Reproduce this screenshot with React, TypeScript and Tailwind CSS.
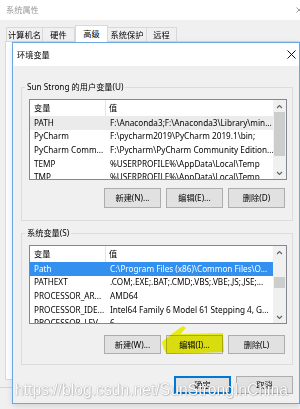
import React from "react"

type Row = { name: string; value: string }

const userRows: Row[] = [
  { name: "PATH", value: "F:\\Anaconda3;F:\\Anaconda3\\Library\\min..." },
  { name: "PyCharm", value: "F:\\pycharm2019\\PyCharm 2019.1\\bin;" },
  { name: "PyCharm Comm...", value: "F:\\Pycharm\\PyCharm Community Edition..." },
  { name: "TEMP", value: "%USERPROFILE%\\AppData\\Local\\Temp" },
  { name: "TMP", value: "%USERPROFILE%\\AppData\\Local\\Temp" },
]

const sysRows: Row[] = [
  { name: "Path", value: "C:\\Program Files (x86)\\Common Files\\O..." },
  { name: "PATHEXT", value: ".COM;.EXE;.BAT;.CMD;.VBS;.VBE;.JS;.JSE;..." },
  { name: "PROCESSOR_AR...", value: "AMD64" },
  { name: "PROCESSOR_IDE...", value: "Intel64 Family 6 Model 61 Stepping 4, G..." },
  { name: "PROCESSOR_LEV...", value: "6" },
]

const tabs = [
  { label: "计算机名", w: "w-[37px]" },
  { label: "硬件", w: "w-[32px]" },
  { label: "高级", w: "w-[33px]", active: true },
  { label: "系统保护", w: "w-[39px]" },
  { label: "远程", w: "w-[30px]" },
]

function Chevron({ up }: { up?: boolean }) {
  return (
    <svg width="7" height="5" viewBox="0 0 7 5" className="block">
      <polyline
        points={up ? "1,4 3.5,1.5 6,4" : "1,1 3.5,3.5 6,1"}
        fill="none"
        stroke="#606060"
        strokeWidth="1.1"
      />
    </svg>
  )
}

function Btn({ label, focused }: { label: string; focused?: boolean }) {
  return (
    <div
      className={
        "flex h-full w-[57px] items-center justify-center bg-[#e1e1e1] text-black border " +
        (focused ? "border-[#0078d7] shadow-[inset_0_0_0_1px_#0078d7]" : "border-[#adadad]")
      }
    >
      {label}
    </div>
  )
}

function VarList({
  rows,
  size,
  active,
  thumbClass,
}: {
  rows: Row[]
  size: string
  active?: boolean
  thumbClass: string
}) {
  return (
    <div className={"ml-[7px] flex w-[258px] border border-[#828790] bg-white " + size}>
      <div className="flex min-w-0 flex-1 flex-col overflow-hidden">
        <div className="flex h-[16px] shrink-0 items-center">
          <div className="flex h-full w-[76px] items-center border-r border-[#e5e5e5] pl-[4px]">变量</div>
          <div className="pl-[3px]">值</div>
        </div>
        {rows.map((r, i) => {
          const sel = i === 0
          return (
            <div
              key={r.name}
              className={
                "flex h-[13.6px] shrink-0 items-center whitespace-nowrap " +
                (sel ? (active ? "bg-[#3390ef] text-white" : "bg-[#ebebeb]") : "")
              }
            >
              <div className="w-[77px] shrink-0 overflow-hidden pl-[4px]">{r.name}</div>
              <div className="overflow-hidden pl-[3px]">{r.value}</div>
            </div>
          )
        })}
      </div>
      <div className="flex w-[13px] shrink-0 flex-col bg-[#f0f0f0]">
        <div className="flex h-[12px] items-center justify-center">
          <Chevron up />
        </div>
        <div className="flex-1">
          <div className={"mx-[1px] bg-[#cdcdcd] " + thumbClass} />
        </div>
        <div className="flex h-[12px] items-center justify-center">
          <Chevron />
        </div>
      </div>
    </div>
  )
}

export default function App() {
  return (
    <div className="relative h-[409px] w-[300px] overflow-hidden bg-[#f0f0f0] font-['Noto_Sans','Noto_Sans_CJK_SC',sans-serif] text-[8.2px] leading-[12px] text-black">
      {/* 系统属性 window behind */}
      <div className="flex h-[20px] items-center justify-between bg-white pl-[6px] text-[#9a9a9a]">
        <span>系统属性</span>
        <svg width="6" height="6" viewBox="0 0 6 6" className="-mr-[2px]">
          <path d="M0.5 0.5 L5.5 5.5 M5.5 0.5 L0.5 5.5" stroke="#9a9a9a" strokeWidth="1" />
        </svg>
      </div>
      <div className="flex h-[21px] items-end pl-[6px]">
        {tabs.map((t) =>
          t.active ? (
            <div
              key={t.label}
              className={
                "relative z-10 -mb-[1px] flex h-[17px] items-center justify-center border border-b-0 border-[#d9d9d9] bg-white " +
                t.w
              }
            >
              {t.label}
            </div>
          ) : (
            <div
              key={t.label}
              className={
                "flex h-[14px] items-center justify-center border border-b-0 border-l-0 border-[#d9d9d9] bg-[#f0f0f0] first:border-l " +
                t.w
              }
            >
              {t.label}
            </div>
          )
        )}
      </div>
      <div className="ml-[5px] h-[339px] border border-[#d9d9d9] bg-white" />
      <div className="mt-[7px] border-t border-[#d4d4d4]" />

      {/* 环境变量 dialog */}
      <div className="absolute left-[12px] top-[42px] flex h-[362px] w-[288px] flex-col border border-[#6aa6df] bg-[#f0f0f0] shadow-[0_2px_6px_rgba(0,0,0,0.12)]">
        <div className="flex h-[23px] shrink-0 items-center justify-between bg-white pl-[4px] pr-[3px]">
          <span>环境变量</span>
          <svg width="9" height="9" viewBox="0 0 9 9">
            <path d="M0.5 0.5 L8.5 8.5 M8.5 0.5 L0.5 8.5" stroke="#111" strokeWidth="1" />
          </svg>
        </div>

        <div className="flex flex-col pl-[8px]">
          <fieldset className="mt-[15px] w-[272px] border border-[#dcdcdc] pb-[12px]">
            <legend className="ml-[3px] px-[2px] leading-[12px]">Sun Strong 的用户变量(U)</legend>
            <div className="mt-[6px]">
              <VarList rows={userRows} size="h-[81px]" thumbClass="h-[44px]" />
            </div>
            <div className="mt-[8px] flex h-[20px] justify-end gap-[5px] pr-[7px]">
              <Btn label="新建(N)..." />
              <Btn label="编辑(E)..." />
              <Btn label="删除(D)" />
            </div>
          </fieldset>

          <fieldset className="mt-[6px] w-[272px] border border-[#dcdcdc] pb-[10px]">
            <legend className="ml-[3px] px-[2px] leading-[12px]">系统变量(S)</legend>
            <div className="mt-[6px]">
              <VarList rows={sysRows} size="h-[79px]" active thumbClass="mt-[19px] h-[11px]" />
            </div>
            <div className="mt-[11px] flex h-[19px] justify-end gap-[5px] pr-[7px]">
              <Btn label="新建(W)..." />
              <Btn label="编辑(I)..." />
              <Btn label="删除(L)" />
            </div>
          </fieldset>
        </div>

        <div className="mt-[11px] flex h-[18px] justify-end gap-[5px] pr-[6px]">
          <Btn label="确定" focused />
          <Btn label="取消" />
        </div>
      </div>

      {/* yellow marker over 编辑(I) */}
      <svg className="pointer-events-none absolute left-0 top-0 mix-blend-multiply" width="300" height="409">
        <path
          d="M162 342 C169 336 177 330 183 326 L186 328 C184 330 182 332 181 334 L223 333 L224 352 L167 354 C164 351 163 347 162 342 Z"
          fill="#f6fa10"
        />
      </svg>

      {/* watermark */}
      <div className="pointer-events-none absolute left-[15px] top-[382px] whitespace-nowrap font-['Liberation_Sans',Arial,sans-serif] text-[15.7px] leading-[16px] text-white [text-shadow:0_0_1px_rgba(0,0,0,0.45),1px_1px_1px_rgba(0,0,0,0.15)]">
        https://blog.csdn.net/SunStrongInChina
      </div>
    </div>
  )
}
